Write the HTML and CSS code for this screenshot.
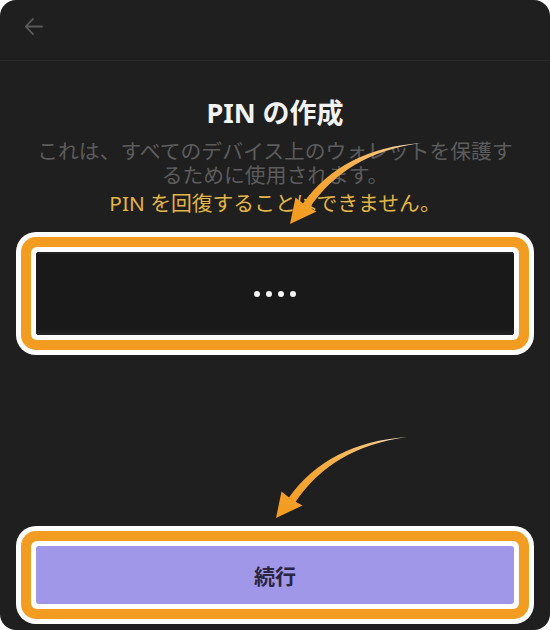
FILE: index.html
```html
<!DOCTYPE html>
<html lang="ja">
<head>
<meta charset="utf-8">
<title>PIN の作成</title>
<link rel="stylesheet" href="styles.css">
</head>
<body>
<div class="card">
  <header class="header">
    <svg class="back" width="20" height="20" viewBox="0 0 20 20" aria-label="戻る">
      <path d="M18 9.5H1.8M9 1.8L1.8 9.5L9 17.2" fill="none" stroke="#5a5a5a" stroke-width="1.8" stroke-linecap="round" stroke-linejoin="round"/>
    </svg>
  </header>
  <main class="main">
    <h1 class="title">PIN の作成</h1>
    <p class="desc">これは、すべてのデバイス上のウォレットを保護するために使用されます。</p>
    <p class="warn">PIN を回復することはできません。</p>
    <div class="ring-outer">
      <div class="ring-orange">
        <div class="ring-inner">
          <div class="pin-field">
            <span class="dot"></span><span class="dot"></span><span class="dot"></span><span class="dot"></span>
          </div>
        </div>
      </div>
    </div>
    <div class="spacer"></div>
    <div class="ring-outer">
      <div class="ring-orange">
        <div class="ring-inner">
          <button class="continue">続行</button>
        </div>
      </div>
    </div>
  </main>
  <svg class="arrows" width="550" height="630" viewBox="0 0 550 630">
    <defs>
      <linearGradient id="ag" gradientUnits="userSpaceOnUse" x1="407" y1="437" x2="285" y2="510">
        <stop offset="0" stop-color="#fff3e2"/>
        <stop offset="0.22" stop-color="#f8c57c"/>
        <stop offset="0.6" stop-color="#f5ab42"/>
        <stop offset="1" stop-color="#f39c22"/>
      </linearGradient>
      <g id="arr">
        <path d="M407,437 Q328.2,442.6 288.7,497.7 L295.3,502.3 Q331.8,447.4 407,437 Z"/>
        <path d="M276,518 L281.5,491.5 L291.5,499.5 L302.5,505.5 Z"/>
      </g>
    </defs>
    <use href="#arr" fill="url(#ag)"/>
    <use href="#arr" transform="translate(14,-294)" fill="url(#ag)"/>
  </svg>
</div>
</body>
</html>
```

FILE: styles.css
```css
html, body {
  margin: 0;
  padding: 0;
  background: #ffffff;
}

body {
  font-family: "Noto Sans", "Noto Sans CJK JP", sans-serif;
}

.card {
  position: relative;
  width: 550px;
  height: 630px;
  background: #1f1f1f;
  border-radius: 16px;
  overflow: hidden;
  display: flex;
  flex-direction: column;
}

.header {
  box-sizing: border-box;
  height: 61px;
  padding: 17px 0 0 24px;
  border-bottom: 1px solid #2a2a2a;
  display: flex;
  align-items: flex-start;
}

.back {
  display: block;
}

.main {
  flex: 1;
  display: flex;
  flex-direction: column;
  padding: 34px 16px 6px;
}

.title {
  margin: 0;
  font-size: 27px;
  line-height: 36px;
  font-weight: 700;
  color: #f2f2f2;
  text-align: center;
}

.desc {
  margin: 8px auto 0;
  width: 492px;
  font-size: 20.8px;
  line-height: 24px;
  color: #5c5c5c;
  text-align: center;
}

.warn {
  margin: 4px 0 0;
  font-size: 20.8px;
  line-height: 24px;
  color: #e2b546;
  text-align: center;
}

.ring-outer {
  margin-top: 17px;
  background: #ffffff;
  padding: 5px;
  border-radius: 20px;
}

.ring-orange {
  background: #f39c22;
  padding: 10px;
  border-radius: 15px;
}

.ring-inner {
  background: #ffffff;
  padding: 5px;
  border-radius: 6px;
}

.pin-field {
  height: 83px;
  background: #191919;
  border-radius: 3px;
  display: flex;
  align-items: center;
  justify-content: center;
  gap: 6px;
  box-shadow: inset 0 2px 0 #232323, inset 0 -6px 3px -2px #252525;
}

.dot {
  width: 6px;
  height: 6px;
  border-radius: 50%;
  background: #f5f5f5;
}

.spacer {
  flex: 1;
}

.continue {
  display: flex;
  align-items: center;
  justify-content: center;
  width: 100%;
  height: 58px;
  margin: 0;
  border: 0;
  border-radius: 3px;
  background: #a197e9;
  color: #2a2540;
  font-family: "Noto Sans", "Noto Sans CJK JP", sans-serif;
  font-size: 21px;
  font-weight: 700;
  padding: 0;
}

.arrows {
  position: absolute;
  top: 0;
  left: 0;
  pointer-events: none;
}
```
